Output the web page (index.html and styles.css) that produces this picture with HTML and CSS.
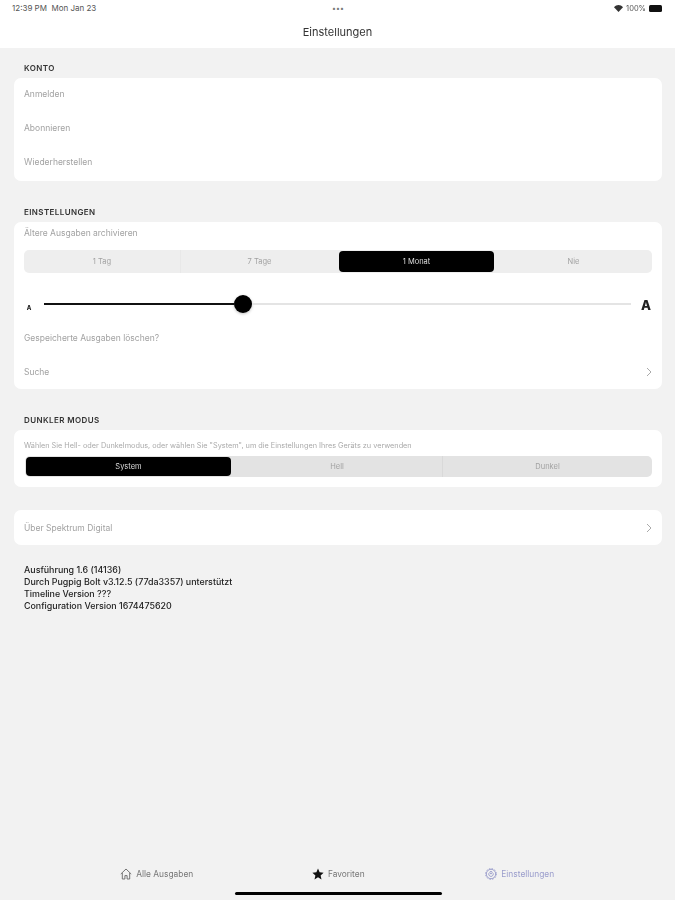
FILE: index.html
```html
<!DOCTYPE html>
<html lang="de">
<head>
  <meta charset="UTF-8" />
  <meta name="viewport" content="width=device-width, initial-scale=1.0"/>
  <title>Einstellungen</title>
  <link rel="stylesheet" href="styles.css">
</head>
<body>
<div class="page">

  <!-- KOPFZEILE -->
  <header class="top">
    <div class="status-bar">
      <span class="status-time">12:39 PM&nbsp;&nbsp;Mon Jan 23</span>
      <span class="status-dots">•••</span>
      <span class="status-right">
        <svg class="wifi" width="9" height="7" viewBox="0 0 9 7"><path d="M4.5 7 0 2.2C2.6-.7 6.4-.7 9 2.2z" fill="#333"/></svg>
        <span>100%</span>
        <span class="battery"><span class="battery-fill"></span></span>
      </span>
    </div>
    <div class="nav-title">Einstellungen</div>
  </header>

  <main class="content">

    <section class="section">
      <h2 class="section-title">KONTO</h2>
      <div class="card card-konto">
        <div class="row row-konto">Anmelden</div>
        <div class="row row-konto">Abonnieren</div>
        <div class="row row-konto">Wiederherstellen</div>
      </div>
    </section>

    <section class="section">
      <h2 class="section-title">EINSTELLUNGEN</h2>
      <div class="card">
        <div class="archive-label">Ältere Ausgaben archivieren</div>
        <div class="segments segments-four">
          <div class="segment has-line">1 Tag</div>
          <div class="segment">7 Tage</div>
          <div class="segment active">1 Monat</div>
          <div class="segment">Nie</div>
        </div>
        <div class="slider">
          <span class="slider-a small">A</span>
          <div class="slider-track">
            <div class="slider-fill"></div>
            <div class="slider-thumb"></div>
            <div class="slider-rest"></div>
          </div>
          <span class="slider-a big">A</span>
        </div>
        <div class="row">Gespeicherte Ausgaben löschen?</div>
        <div class="row">
          <span>Suche</span>
          <svg class="chevron" width="6" height="10" viewBox="0 0 6 10"><path d="M1 1l4 4-4 4" fill="none" stroke="#aaa" stroke-width="1"/></svg>
        </div>
      </div>
    </section>

    <section class="section section-dark">
      <h2 class="section-title">DUNKLER MODUS</h2>
      <div class="card card-dark">
        <div class="dark-note">Wählen Sie Hell- oder Dunkelmodus, oder wählen Sie "System", um die Einstellungen Ihres Geräts zu verwenden</div>
        <div class="segments segments-three">
          <div class="segment active">System</div>
          <div class="segment has-line">Hell</div>
          <div class="segment">Dunkel</div>
        </div>
      </div>
    </section>

    <div class="card card-about">
      <div class="row row-about">
        <span>Über Spektrum Digital</span>
        <svg class="chevron" width="6" height="10" viewBox="0 0 6 10"><path d="M1 1l4 4-4 4" fill="none" stroke="#aaa" stroke-width="1"/></svg>
      </div>
    </div>

    <div class="version">
      <div>Ausführung 1.6 (14136)</div>
      <div>Durch Pugpig Bolt v3.12.5 (77da3357) unterstützt</div>
      <div>Timeline Version ???</div>
      <div>Configuration Version 1674475620</div>
    </div>
  </main>

  <!-- TABS -->
  <nav class="tabs">
    <div class="tab">
      <svg width="12" height="12" viewBox="0 0 12 12"><path d="M.8 6 6 1l5.2 5M2.3 5v6h2.6V7.6h2.2V11h2.6V5" fill="none" stroke="#666" stroke-width=".9"/></svg>
      <span>Alle Ausgaben</span>
    </div>
    <div class="tab">
      <svg width="12" height="12" viewBox="0 0 12 12"><path d="M6 .6l1.6 3.7 4 .4-3 2.7.9 4L6 9.3l-3.5 2.1.9-4-3-2.7 4-.4z" fill="#111"/></svg>
      <span>Favoriten</span>
    </div>
    <div class="tab tab-active">
      <svg width="12" height="12" viewBox="0 0 12 12" fill="none" stroke="#8a8ec4" stroke-width=".8"><circle cx="6" cy="6" r="4.7"/><circle cx="6" cy="6" r="5.4" stroke-dasharray="1.4 1.43"/><path d="M3.6 5.4C3.8 7.6 4.8 8.4 6 8.4s2.2-.8 2.4-3"/><circle cx="6" cy="4.6" r="1.2"/></svg>
      <span>Einstellungen</span>
    </div>
  </nav>
  <div class="home-bar"><div class="home-indicator"></div></div>

</div>
</body>
</html>
```

FILE: styles.css
```css
* {
  box-sizing: border-box;
}

body {
  margin: 0;
  font-family: Inter, "Liberation Sans", sans-serif;
  background: #f2f2f2;
  color: #888;
}

.page {
  height: 900px;
  display: flex;
  flex-direction: column;
  overflow: hidden;
  filter: blur(0.35px);
}

/* === KOPFZEILE === */
.top {
  background: #fff;
  height: 48px;
  flex: none;
}

.status-bar {
  height: 16px;
  padding: 0 11px 0 12px;
  display: grid;
  grid-template-columns: 1fr auto 1fr;
  align-items: center;
  font-size: 8px;
  color: #555;
}

.status-dots {
  font-size: 7px;
  color: #777;
}

.status-right {
  display: flex;
  justify-content: flex-end;
  align-items: center;
  gap: 3px;
  font-size: 7.5px;
}

.battery {
  width: 15px;
  height: 7px;
  padding-right: 2px;
  display: block;
}

.battery-fill {
  display: block;
  height: 100%;
  background: #111;
  border-radius: 1.5px;
}

.nav-title {
  height: 32px;
  line-height: 32px;
  text-align: center;
  font-size: 11px;
  color: #333;
}

/* === INHALT === */
.content {
  flex: 1;
  padding: 14px 13px 0 14px;
}

.section {
  margin-bottom: 25px;
}

.section-dark {
  margin-bottom: 23px;
}

.section-title {
  margin: 0 10px 4px;
  height: 12px;
  line-height: 12px;
  font-size: 8px;
  font-weight: 600;
  letter-spacing: 0.4px;
  color: #333;
}

.card {
  background: #fff;
  border-radius: 7px;
}

.card-konto {
  padding-bottom: 1px;
}

.row {
  height: 34px;
  padding: 0 10px;
  display: flex;
  justify-content: space-between;
  align-items: center;
  font-size: 8.5px;
  color: #a2a2a2;
}

.row-konto {
  padding-bottom: 2px;
}

.row-about {
  height: 35px;
}

.archive-label {
  height: 22px;
  line-height: 22px;
  padding: 0 10px;
  margin-bottom: 6px;
  font-size: 8.5px;
  color: #a2a2a2;
}

/* === SEGMENTE === */
.segments {
  margin: 0 10px;
  display: grid;
  align-items: center;
  background: #eeeeee;
  border-radius: 5px;
  font-size: 7.5px;
  color: #a2a2a2;
}

.segments-four {
  grid-template-columns: repeat(4, 1fr);
  height: 23px;
}

.segments-three {
  grid-template-columns: 207px 211px 1fr;
  height: 21px;
  margin: 0 10px 0 11px;
  background: #e3e3e3;
}

.segment {
  height: 100%;
  display: flex;
  align-items: center;
  justify-content: center;
}

.segment.has-line {
  border-right: 1px solid #e8e8e8;
}

.segments-three .segment.has-line {
  border-right-color: #d9d9d9;
}

.segment.active {
  background: #000;
  color: #ddd;
  border-radius: 4px;
  margin: 1px;
  height: calc(100% - 2px);
}

/* === SLIDER === */
.slider {
  margin: 19px 10px 5px;
  height: 24px;
  display: flex;
  align-items: center;
}

.slider-a {
  font-weight: 800;
  color: #222;
  text-align: center;
}

.slider-a.small {
  width: 10px;
  font-size: 6px;
  margin-right: 10px;
  padding-top: 6px;
}

.slider-a.big {
  width: 12px;
  font-size: 13px;
  margin-left: 9px;
  padding-top: 2px;
}

.slider-track {
  flex: 1;
  display: flex;
  align-items: center;
}

.slider-fill {
  width: 190px;
  height: 2px;
  background: #111;
}

.slider-thumb {
  width: 18px;
  height: 18px;
  flex: none;
  border-radius: 50%;
  background: #000;
  box-shadow: 0 1px 3px rgba(0, 0, 0, 0.25);
}

.slider-rest {
  flex: 1;
  height: 2px;
  background: #e4e4e4;
}

/* === DUNKLER MODUS === */
.card-dark {
  height: 57px;
  padding-top: 11px;
}

.dark-note {
  height: 10px;
  line-height: 10px;
  margin: 0 10px 5px;
  font-size: 7.3px;
  color: #aaa;
  white-space: nowrap;
}

.version {
  margin: 18px 10px 0;
  padding-top: 1px;
  font-size: 8.9px;
  line-height: 12px;
  font-weight: 500;
  color: #222;
}

/* === TABS === */
.tabs {
  flex: none;
  display: grid;
  grid-template-columns: repeat(3, 1fr);
  padding: 0 64.5px 0 66px;
  height: 28px;
  align-items: center;
}

.tab {
  display: flex;
  justify-content: center;
  align-items: center;
  gap: 4px;
  font-size: 8.4px;
  color: #777;
}

.tab-active {
  color: #9a9dcc;
}

.home-bar {
  flex: none;
  height: 12px;
  padding: 4px 0 0 1px;
  display: flex;
  justify-content: center;
}

.home-indicator {
  width: 207px;
  height: 3px;
  border-radius: 2px;
  background: #000;
}
```
